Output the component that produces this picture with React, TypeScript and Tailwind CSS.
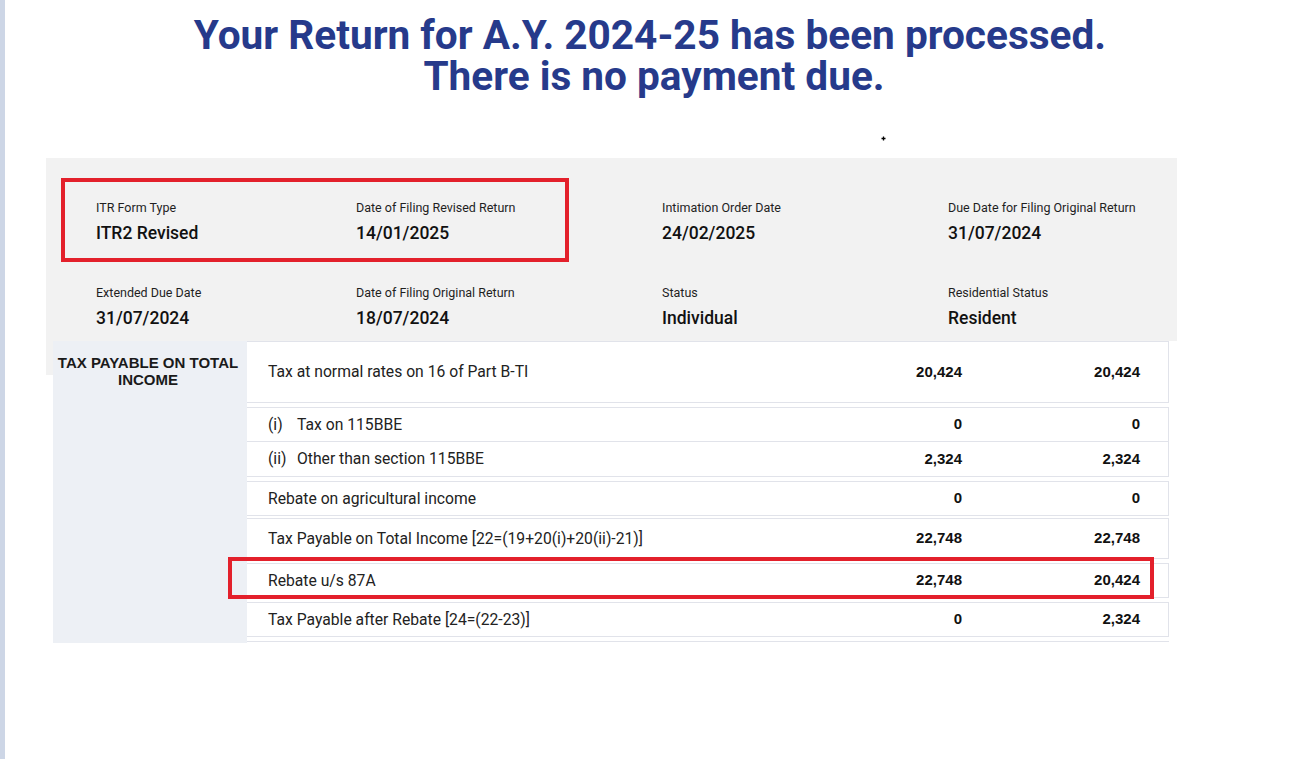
const infoRows = [
  [
    { label: "ITR Form Type", value: "ITR2 Revised" },
    { label: "Date of Filing Revised Return", value: "14/01/2025" },
    { label: "Intimation Order Date", value: "24/02/2025" },
    { label: "Due Date for Filing Original Return", value: "31/07/2024" },
  ],
  [
    { label: "Extended Due Date", value: "31/07/2024" },
    { label: "Date of Filing Original Return", value: "18/07/2024" },
    { label: "Status", value: "Individual" },
    { label: "Residential Status", value: "Resident" },
  ],
];

type Row = {
  prefix?: string;
  label: string;
  a: string;
  b: string;
  cls: string;
};

const taxRows: Row[] = [
  { label: "Tax at normal rates on 16 of Part B-TI", a: "20,424", b: "20,424", cls: "h-[62px] mb-[4px]" },
  { prefix: "(i)", label: "Tax on 115BBE", a: "0", b: "0", cls: "h-[35px] mb-0" },
  { prefix: "(ii)", label: "Other than section 115BBE", a: "2,324", b: "2,324", cls: "h-[35px] mb-[4px] border-t-0" },
  { label: "Rebate on agricultural income", a: "0", b: "0", cls: "h-[35px] mb-[2px]" },
  { label: "Tax Payable on Total Income [22=(19+20(i)+20(ii)-21)]", a: "22,748", b: "22,748", cls: "h-[41px] mb-[4px]" },
  { label: "Rebate u/s 87A", a: "22,748", b: "20,424", cls: "h-[35px] mb-[4px]" },
  { label: "Tax Payable after Rebate [24=(22-23)]", a: "0", b: "2,324", cls: "h-[35px] mb-[4px]" },
];

export default function App() {
  return (
    <div className="flex min-h-screen bg-white" style={{ fontFamily: "Roboto, 'Liberation Sans', sans-serif" }}>
      <div className="w-[5px] shrink-0 bg-[#cdd6e6]" />
      <div className="flex-1">
        <h1 className="pr-[12px] pt-[15px] text-center text-[40.6px] font-bold leading-[41px] text-[#263a8b]">
          <span className="block">Your Return for A.Y. 2024-25 has been processed.</span>
          <span className="block pl-[8px]">There is no payment due.</span>
        </h1>

        <div className="flex h-[61px] items-start pl-[876px] pt-[39px]">
          <svg width="5" height="5" viewBox="0 0 5 5">
            <path d="M2.5 0.5v4M0.5 2.5h4" stroke="#000" strokeWidth="1.3" />
          </svg>
        </div>

        {/* summary panel */}
        <div className="relative ml-[41px] w-[1131px] bg-[#f2f2f2] pb-[12px] pl-[50px] pt-[42px]">
          <div className="absolute left-[15px] top-[20px] h-[84px] w-[508px] border-[4px] border-[#e3202b]" />
          {infoRows.map((row, i) => (
            <div key={i} className={`grid grid-cols-[260px_306px_286px_1fr] ${i === 0 ? "mb-[41px]" : ""}`}>
              {row.map((c) => (
                <div key={c.label}>
                  <div className="text-[12.5px] leading-[15px] text-[#1f1f1f]">{c.label}</div>
                  <div className="mt-[7px] text-[17.5px] font-medium leading-[22px] text-[#111]">{c.value}</div>
                </div>
              ))}
            </div>
          ))}
        </div>

        {/* tax payable table */}
        <div className="relative ml-[41px] flex w-[1123px]">
          <div className="w-[7px] shrink-0">
            <div className="h-[34px] bg-[#f2f2f2]" />
          </div>
          <div className="w-[194px] shrink-0 bg-[#edf0f5] pb-[6px] pt-[13px]">
            <div
              className="-ml-[4px] text-center text-[15px] font-bold leading-[17px] text-[#1a1a1a]"
              style={{ fontFamily: "'Liberation Sans', Arial, sans-serif" }}
            >
              TAX PAYABLE ON TOTAL
              <br />
              INCOME
            </div>
          </div>
          <div className="flex-1">
            {taxRows.map((r) => (
              <div
                key={r.label}
                className={`flex items-center border border-l-0 border-[#e1e3ea] bg-white pl-[21px] pr-[28px] ${r.cls}`}
              >
                <div className="flex flex-1 text-[15.7px] text-[#222]">
                  {r.prefix && <span className="w-[29px]">{r.prefix}</span>}
                  <span>{r.label}</span>
                </div>
                <div
                  className="w-[178px] text-right text-[15px] font-bold text-[#111]"
                  style={{ fontFamily: "'Liberation Sans', Arial, sans-serif" }}
                >
                  {r.a}
                </div>
                <div
                  className="w-[178px] text-right text-[15px] font-bold text-[#111]"
                  style={{ fontFamily: "'Liberation Sans', Arial, sans-serif" }}
                >
                  {r.b}
                </div>
              </div>
            ))}
            <div className="h-[2px] border-t border-[#e1e3ea]" />
          </div>
          <div className="pointer-events-none absolute left-[182px] top-[216px] h-[42px] w-[926px] border-[4px] border-[#e3202b]" />
        </div>
      </div>
    </div>
  );
}
